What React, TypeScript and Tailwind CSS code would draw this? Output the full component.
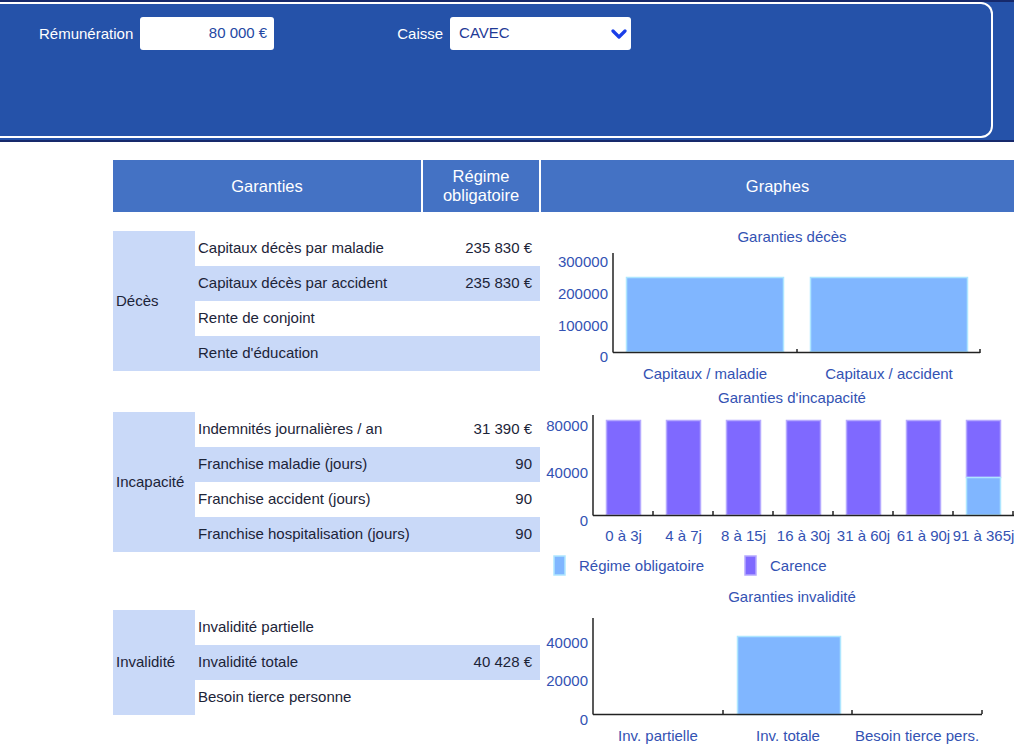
import React from "react";

const font = { fontFamily: '"Liberation Sans", Arial, sans-serif' };

type Row = { label: string; value?: string };

const sections: { title: string; rows: Row[]; mt: string }[] = [
  {
    title: "Décès",
    mt: "mt-[19px]",
    rows: [
      { label: "Capitaux décès par maladie", value: "235 830 €" },
      { label: "Capitaux décès par accident", value: "235 830 €" },
      { label: "Rente de conjoint" },
      { label: "Rente d'éducation" },
    ],
  },
  {
    title: "Incapacité",
    mt: "mt-[41px]",
    rows: [
      { label: "Indemnités journalières / an", value: "31 390 €" },
      { label: "Franchise maladie (jours)", value: "90" },
      { label: "Franchise accident (jours)", value: "90" },
      { label: "Franchise hospitalisation (jours)", value: "90" },
    ],
  },
  {
    title: "Invalidité",
    mt: "mt-[58px]",
    rows: [
      { label: "Invalidité partielle" },
      { label: "Invalidité totale", value: "40 428 €" },
      { label: "Besoin tierce personne" },
    ],
  },
];

const AXIS = "#222222";
const TXT = "#3352b3";
const BLUE = "#80b6ff";
const BLUE_S = "#aee6ff";
const PURP = "#7f69ff";
const PURP_S = "#b5a9ff";

function Section({ title, rows, mt }: { title: string; rows: Row[]; mt: string }) {
  return (
    <div className={`flex ${mt}`}>
      <div className="w-[82px] bg-[#c9d9f8] flex items-center pl-[3px] text-[15px] text-[#1c2438]">
        {title}
      </div>
      <div className="w-[345px]">
        {rows.map((r, i) => (
          <div
            key={r.label}
            className={`h-[35px] flex items-center justify-between pl-[3px] pr-[8px] text-[15px] text-[#1c2438] ${
              i % 2 === 1 ? "bg-[#c9d9f8]" : "bg-white"
            }`}
          >
            <span>{r.label}</span>
            <span>{r.value ?? ""}</span>
          </div>
        ))}
      </div>
    </div>
  );
}

function DecesChart() {
  return (
    <svg width={473} height={173} style={font}>
      <text x={251} y={30} textAnchor="middle" fontSize={15} fill={TXT}>
        Garanties décès
      </text>
      {[
        ["300000", 55],
        ["200000", 87],
        ["100000", 119],
        ["0", 150],
      ].map(([t, y]) => (
        <text key={t} x={67} y={y as number} textAnchor="end" fontSize={15} fill={TXT}>
          {t}
        </text>
      ))}
      <rect x={85.5} y={65.5} width={157} height={74.5} fill={BLUE} stroke={BLUE_S} strokeWidth={1.5} />
      <rect x={269.5} y={65.5} width={157} height={74.5} fill={BLUE} stroke={BLUE_S} strokeWidth={1.5} />
      <line x1={72} y1={41} x2={72} y2={140.5} stroke={AXIS} strokeWidth={1.5} />
      <line x1={72} y1={140.5} x2={439} y2={140.5} stroke={AXIS} strokeWidth={1.5} />
      <line x1={256} y1={137} x2={256} y2={140} stroke={AXIS} strokeWidth={1.5} />
      <line x1={439} y1={137} x2={439} y2={141} stroke={AXIS} strokeWidth={1.5} />
      <text x={164} y={167} textAnchor="middle" fontSize={15} fill={TXT}>
        Capitaux / maladie
      </text>
      <text x={348} y={167} textAnchor="middle" fontSize={15} fill={TXT}>
        Capitaux / accident
      </text>
    </svg>
  );
}

function IncapaciteChart() {
  const cats = ["0 à 3j", "4 à 7j", "8 à 15j", "16 à 30j", "31 à 60j", "61 à 90j", "91 à 365j"];
  return (
    <svg width={473} height={200} style={font}>
      <text x={251} y={18} textAnchor="middle" fontSize={15} fill={TXT}>
        Garanties d'incapacité
      </text>
      {[
        ["80000", 46],
        ["40000", 93],
        ["0", 141],
      ].map(([t, y]) => (
        <text key={t} x={47} y={y as number} textAnchor="end" fontSize={15} fill={TXT}>
          {t}
        </text>
      ))}
      {cats.map((c, i) => {
        const x = 65.5 + i * 60;
        const last = i === cats.length - 1;
        return (
          <g key={c}>
            <rect x={x} y={35.5} width={34} height={last ? 57 : 94.5} fill={PURP} stroke={PURP_S} strokeWidth={1.5} />
            {last && <rect x={x} y={92.5} width={34} height={37.5} fill={BLUE} stroke={BLUE_S} strokeWidth={1.5} />}
            <line x1={112 + i * 60} y1={126} x2={112 + i * 60} y2={130} stroke={AXIS} strokeWidth={1.5} />
            <text x={82.5 + i * 60} y={156} textAnchor="middle" fontSize={15} fill={TXT}>
              {c}
            </text>
          </g>
        );
      })}
      <line x1={52} y1={30} x2={52} y2={130.5} stroke={AXIS} strokeWidth={1.5} />
      <line x1={52} y1={130.5} x2={473} y2={130.5} stroke={AXIS} strokeWidth={1.5} />
      <rect x={13} y={171} width={11} height={19} fill={BLUE} stroke={BLUE_S} strokeWidth={1.5} />
      <text x={38} y={186} fontSize={15} fill={TXT}>
        Régime obligatoire
      </text>
      <rect x={204} y={171} width={11} height={19} fill={PURP} stroke={PURP_S} strokeWidth={1.5} />
      <text x={229} y={186} fontSize={15} fill={TXT}>
        Carence
      </text>
    </svg>
  );
}

function InvaliditeChart() {
  return (
    <svg width={473} height={162} style={font}>
      <text x={251} y={17} textAnchor="middle" fontSize={15} fill={TXT}>
        Garanties invalidité
      </text>
      {[
        ["40000", 63],
        ["20000", 101],
        ["0", 140],
      ].map(([t, y]) => (
        <text key={t} x={47} y={y as number} textAnchor="end" fontSize={15} fill={TXT}>
          {t}
        </text>
      ))}
      <rect x={196.5} y={51.5} width={103} height={78} fill={BLUE} stroke={BLUE_S} strokeWidth={1.5} />
      <line x1={52} y1={33} x2={52} y2={129.5} stroke={AXIS} strokeWidth={1.5} />
      <line x1={52} y1={129.5} x2={441} y2={129.5} stroke={AXIS} strokeWidth={1.5} />
      {[182, 311, 441].map((x) => (
        <line key={x} x1={x} y1={125} x2={x} y2={129} stroke={AXIS} strokeWidth={1.5} />
      ))}
      <text x={117} y={156} textAnchor="middle" fontSize={15} fill={TXT}>
        Inv. partielle
      </text>
      <text x={247} y={156} textAnchor="middle" fontSize={15} fill={TXT}>
        Inv. totale
      </text>
      <text x={376} y={156} textAnchor="middle" fontSize={15} fill={TXT}>
        Besoin tierce pers.
      </text>
    </svg>
  );
}

export default function App() {
  return (
    <div className="w-[1014px] h-[747px] overflow-hidden bg-white" style={font}>
      <header className="h-[142px] bg-[#2552a9] border-t-2 border-b-2 border-[#16296b]">
        <div className="w-[993px] h-[136px] border-2 border-l-0 border-white rounded-r-[12px] flex items-start pt-[13px] text-[15px]">
          <label className="ml-[39px] mt-[6px] text-white">Rémunération</label>
          <div className="ml-[7px] w-[134px] h-[33px] bg-white rounded-[3px] flex items-center justify-end pr-[7px] text-[#2447a3]">
            80 000 €
          </div>
          <label className="ml-[123px] mt-[6px] text-white">Caisse</label>
          <div className="ml-[7px] w-[181px] h-[33px] bg-white rounded-[3px] flex items-center justify-between pl-[9px] pr-[4px] text-[#1f3a96]">
            <span>CAVEC</span>
            <svg width="16" height="12" viewBox="0 0 16 12">
              <polyline points="2,3 8,9 14,3" fill="none" stroke="#1a3ee8" strokeWidth="3.2" strokeLinecap="round" strokeLinejoin="round" />
            </svg>
          </div>
        </div>
      </header>

      <div className="mt-[18px] ml-[113px] flex gap-[2px] h-[52px] text-white text-[16.5px] leading-[19px]">
        <div className="w-[308px] bg-[#4472c4] flex items-center justify-center">Garanties</div>
        <div className="w-[116px] bg-[#4472c4] flex items-center justify-center text-center">
          Régime
          <br />
          obligatoire
        </div>
        <div className="flex-1 bg-[#4472c4] flex items-center justify-center">Graphes</div>
      </div>

      <div className="flex ml-[113px]">
        <div className="w-[427px]">
          {sections.map((s) => (
            <Section key={s.title} {...s} />
          ))}
        </div>
        <div className="ml-[1px] flex flex-col">
          <DecesChart />
          <IncapaciteChart />
          <InvaliditeChart />
        </div>
      </div>
    </div>
  );
}
